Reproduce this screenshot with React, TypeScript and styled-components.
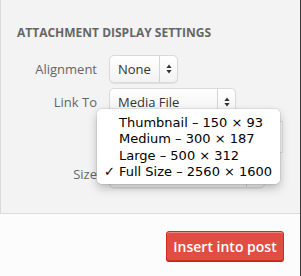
import React from "react";
import styled, { createGlobalStyle } from "styled-components";

const GlobalStyle = createGlobalStyle`
  html, body {
    margin: 0;
    padding: 0;
    background: #fcfcfc;
  }
  body {
    font-family: "Open Sans", "Liberation Sans", sans-serif;
  }
`;

const sizes = [
  { label: "Thumbnail – 150 × 93" },
  { label: "Medium – 300 × 187" },
  { label: "Large – 500 × 312" },
  { label: "Full Size – 2560 × 1600", checked: true },
];

const App = () => {
  return (
    <>
      <GlobalStyle />
      <Frame>
        <Settings>
          <Heading>Attachment Display Settings</Heading>
          <Form>
            <Row>
              <Label>Alignment</Label>
              <SelectBox width={69} arrowWidth={18}>
                <SelectText>None</SelectText>
                <Arrow>
                  <Updown />
                </Arrow>
              </SelectBox>
            </Row>
            <Row>
              <Label>Link To</Label>
              <SelectBox width={127} arrowWidth={18}>
                <SelectText>Media File</SelectText>
                <Arrow>
                  <Updown />
                </Arrow>
              </SelectBox>
            </Row>
            <Row>
              <span />
              <UrlField />
            </Row>
            <SizeRow>
              <Label>Size</Label>
              {/* the open menu covers this select's text */}
              <SelectBox width={156} arrowWidth={18}>
                <SelectText />
                <Arrow>
                  <Updown />
                </Arrow>
              </SelectBox>
              <Popup>
                {sizes.map((s) => (
                  <PopupItem key={s.label}>
                    <Check>{s.checked ? "✓" : ""}</Check>
                    {s.label}
                  </PopupItem>
                ))}
              </Popup>
            </SizeRow>
          </Form>
        </Settings>
        <Footer>
          <InsertButton>Insert into post</InsertButton>
        </Footer>
      </Frame>
    </>
  );
};

const Updown = () => (
  <svg width="6" height="10" viewBox="0 0 6 10">
    <path d="M3 0.5 L5.6 4 L0.4 4 Z" fill="#333" />
    <path d="M3 9.5 L5.6 6 L0.4 6 Z" fill="#333" />
  </svg>
);

export default App;

const Frame = styled.div`
  width: 300px;
  height: 276px;
  border-right: 1px solid #3a3a3a;
  display: flex;
  flex-direction: column;
`;

const Settings = styled.div`
  height: 214px;
  box-sizing: border-box;
  background: #f3f3f3;
  border-left: 1px solid #dcdcdc;
  border-bottom: 1px solid #dcdcdc;
  padding: 26px 0 0 16px;
`;

const Heading = styled.h3`
  margin: 0;
  font-size: 12px;
  font-weight: 700;
  text-transform: uppercase;
  color: #666;
  line-height: 14px;
`;

const Form = styled.div`
  margin-top: 15px;
  display: flex;
  flex-direction: column;
  gap: 5px;
`;

const Row = styled.div`
  display: grid;
  grid-template-columns: 80px auto;
  column-gap: 12px;
  align-items: center;
`;

const SizeRow = styled(Row)`
  position: relative;
  margin-top: 2px;
`;

const Label = styled.span`
  text-align: right;
  font-size: 13px;
  color: #666;
`;

const SelectBox = styled.div<{ width: number; arrowWidth: number }>`
  width: ${(p) => p.width}px;
  height: 28px;
  box-sizing: border-box;
  display: grid;
  grid-template-columns: 1fr ${(p) => p.arrowWidth}px;
  border: 1px solid #dadada;
  border-radius: 5px;
  background: linear-gradient(#ffffff, #f3f3f3);
  box-shadow: 0 1px 1px rgba(0, 0, 0, 0.08);
`;

const SelectText = styled.span`
  padding-left: 8px;
  font-size: 13px;
  color: #333;
  line-height: 26px;
  white-space: nowrap;
  overflow: hidden;
`;

const Arrow = styled.span`
  display: flex;
  align-items: center;
  justify-content: center;
  border-left: 1px solid #d4d4d4;
`;

const UrlField = styled.div`
  width: 174px;
  height: 32px;
  box-sizing: border-box;
  border: 1px solid #dedede;
  background: #fbfbfb;
`;

const Popup = styled.div`
  position: absolute;
  left: 80px;
  top: -51px;
  width: 183px;
  box-sizing: border-box;
  padding: 5px 0 4px;
  background: rgba(255, 255, 255, 0.98);
  border-radius: 5px;
  box-shadow: 0 4px 10px rgba(0, 0, 0, 0.25), 0 0 0 1px rgba(0, 0, 0, 0.06);
`;

const PopupItem = styled.div`
  display: flex;
  align-items: center;
  height: 16.5px;
  font-family: "DejaVu Sans", "Liberation Sans", sans-serif;
  font-size: 13px;
  color: #000;
  white-space: nowrap;
`;

const Check = styled.span`
  width: 22px;
  padding-left: 7px;
  box-sizing: border-box;
  font-size: 13px;
`;

const Footer = styled.div`
  flex: 1;
  display: flex;
  justify-content: flex-end;
  align-items: flex-start;
  padding: 17px 16px 0 0;
`;

const InsertButton = styled.button`
  width: 118px;
  height: 30px;
  border: 1px solid #d02c21;
  border-radius: 3px;
  background: #e14d43;
  color: #fff;
  font-family: "Open Sans", "Liberation Sans", sans-serif;
  font-size: 14px;
  font-weight: 600;
  padding: 0;
  box-shadow: inset 0 1px 0 #ec8a85, 0 1px 0 #ba281e;
  cursor: pointer;
`;
